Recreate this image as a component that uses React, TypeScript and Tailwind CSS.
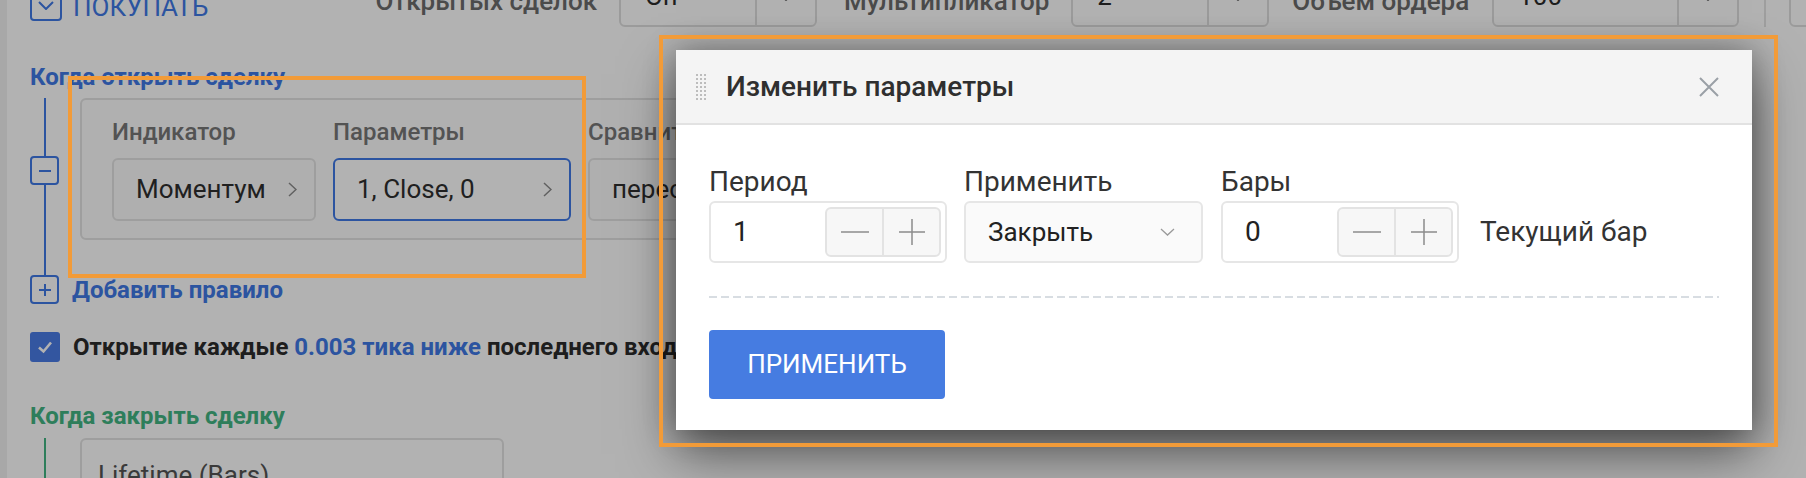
import React from "react";

function ChevronDown({ w = 16, h = 9, color = "#777", sw = 2 }: { w?: number; h?: number; color?: string; sw?: number }) {
  return (
    <svg width={w} height={h} viewBox={`0 0 ${w} ${h}`}>
      <path d={`M1 1 L${w / 2} ${h - 1} L${w - 1} 1`} fill="none" stroke={color} strokeWidth={sw} />
    </svg>
  );
}

function ChevronRight() {
  return (
    <svg width="9" height="15" viewBox="0 0 9 15">
      <path d="M1 1 L8 7.5 L1 14" fill="none" stroke="#8a8a8a" strokeWidth="1.5" />
    </svg>
  );
}

function TopSelect({ value, className }: { value: string; className: string }) {
  return (
    <div className={`flex h-[62px] shrink-0 rounded-[6px] border-2 border-[#dedede] bg-white ${className}`}>
      <div className="flex flex-1 items-center pl-[24px] text-[26px] text-[#2b2b2b]">{value}</div>
      <div className="flex w-[60px] items-center justify-center border-l-2 border-[#dedede]">
        <ChevronDown />
      </div>
    </div>
  );
}

function TopField({ label, value, className, boxClass }: { label: string; value: string; className: string; boxClass: string }) {
  return (
    <div className={`flex shrink-0 items-center ${className}`}>
      <span className="translate-y-[5px] whitespace-nowrap text-[26px] font-medium text-[#6c6c6c]">{label}</span>
      <TopSelect value={value} className={boxClass} />
    </div>
  );
}

function RuleButton({ text, active, className }: { text: string; active?: boolean; className: string }) {
  return (
    <div
      className={`flex h-[63px] items-center justify-between rounded-[6px] border-2 pl-[22px] pr-[17px] text-[26px] text-[#2f2f2f] ${
        active ? "border-[#4079e6] bg-white" : "border-[#e3e3e3] bg-[#fbfbfb]"
      } ${className}`}
    >
      <span className="whitespace-nowrap">{text}</span>
      <ChevronRight />
    </div>
  );
}

function SquareBtn({ plus }: { plus?: boolean }) {
  return (
    <div className="flex h-[29px] w-[29px] shrink-0 items-center justify-center rounded-[4px] border-2 border-[#4079e6] bg-white">
      <svg width="14" height="14" viewBox="0 0 14 14">
        <path d="M1 7 H13" stroke="#4079e6" strokeWidth="2" />
        {plus && <path d="M7 1 V13" stroke="#4079e6" strokeWidth="2" />}
      </svg>
    </div>
  );
}

function Stepper() {
  return (
    <div className="flex h-[50px] w-[116px] rounded-[6px] border-2 border-[#e3e3e3] bg-[#f7f7f7]">
      <div className="flex flex-1 items-center justify-center border-r-2 border-[#e3e3e3]">
        <svg width="28" height="4" viewBox="0 0 28 4">
          <path d="M0 2 H28" stroke="#8c8c8c" strokeWidth="1.5" />
        </svg>
      </div>
      <div className="flex flex-1 items-center justify-center">
        <svg width="26" height="26" viewBox="0 0 26 26">
          <path d="M0 13 H26 M13 0 V26" stroke="#8c8c8c" strokeWidth="1.5" />
        </svg>
      </div>
    </div>
  );
}

function NumberField({ label, value }: { label: string; value: string }) {
  return (
    <div className="flex w-[238px] shrink-0 flex-col">
      <span className="mb-[2px] text-[28px] leading-[34px] text-[#333]">{label}</span>
      <div className="flex h-[62px] items-center justify-between rounded-[6px] border-2 border-[#e6e6e6] bg-white pl-[22px] pr-[4px]">
        <span className="text-[28px] text-[#222]">{value}</span>
        <Stepper />
      </div>
    </div>
  );
}

export default function App() {
  return (
    <div className="relative h-[478px] w-[1806px] overflow-hidden bg-[#f1f1f1] font-['Roboto',sans-serif]">
      {/* page under the dialog */}
      <div className="ml-[7px] flex h-full flex-col bg-white pl-[23px]">
        <div className="-mt-[35px] flex h-[62px] shrink-0 items-center">
          <div className="mb-[6px] flex h-[32px] shrink-0 items-center gap-[11px] self-end">
            <div className="flex h-[32px] w-[32px] items-center justify-center rounded-[4px] border-2 border-[#4079e6]">
              <ChevronDown color="#4079e6" />
            </div>
            <span className="translate-y-[2px] text-[26px] leading-[32px] text-[#4079e6]">ПОКУПАТЬ</span>
          </div>
          <TopField label="Открытых сделок" value="On" className="ml-[167px] gap-[22px]" boxClass="w-[198px]" />
          <TopField label="Мультипликатор" value="2" className="ml-[27px] gap-[22px]" boxClass="w-[198px]" />
          <TopField label="Объем ордера" value="100" className="ml-[23px] gap-[23px]" boxClass="w-[247px]" />
          <div className="ml-[25px] h-[62px] w-[2px] shrink-0 bg-[#e2e2e2]" />
          <TopSelect value="" className="ml-[23px] w-[198px]" />
        </div>

        <div className="mt-[35px] text-[24px] font-bold leading-[30px] text-[#4079e6]">Когда открыть сделку</div>

        <div className="mt-[6px] flex h-[177px] shrink-0">
          <div className="flex w-[29px] shrink-0 flex-col items-center">
            <div className="h-[58px] w-[2px] bg-[#4079e6]" />
            <SquareBtn />
            <div className="w-[2px] flex-1 bg-[#4079e6]" />
          </div>
          <div className="ml-[21px] h-[142px] w-[1200px] shrink-0 rounded-[6px] border-2 border-[#e2e2e2] bg-[#fcfcfc] pl-[30px] pt-[17px]">
            <div className="flex gap-[17px]">
              <div className="flex w-[204px] flex-col">
                <span className="text-[24px] font-medium leading-[30px] text-[#777]">Индикатор</span>
                <RuleButton text="Моментум" className="mt-[11px] w-[204px]" />
              </div>
              <div className="flex w-[238px] flex-col">
                <span className="text-[24px] font-medium leading-[30px] text-[#777]">Параметры</span>
                <RuleButton text="1, Close, 0" active className="mt-[11px] w-[238px]" />
              </div>
              <div className="flex w-[300px] flex-col">
                <span className="text-[24px] font-medium leading-[30px] text-[#777]">Сравнить</span>
                <RuleButton text="пересекает сверху" className="mt-[11px] w-[300px]" />
              </div>
            </div>
          </div>
        </div>

        <div className="flex h-[29px] shrink-0 items-center gap-[13px]">
          <SquareBtn plus />
          <span className="text-[24px] font-bold text-[#4079e6]">Добавить правило</span>
        </div>

        <div className="mt-[28px] flex h-[30px] shrink-0 items-center gap-[13px]">
          <div className="flex h-[30px] w-[30px] items-center justify-center rounded-[3px] bg-[#4a7be5]">
            <svg width="16" height="14" viewBox="0 0 16 14">
              <path d="M2 7.5 L6.5 11.5 L14 2.5" fill="none" stroke="#fff" strokeWidth="2.6" />
            </svg>
          </div>
          <span className="whitespace-nowrap text-[24px] font-bold text-[#2c2c2c]">
            Открытие каждые <span className="text-[#4079e6]">0.003 тика ниже</span> последнего входа
          </span>
        </div>

        <div className="mt-[39px] text-[24px] font-bold leading-[30px] text-[#43b583]">Когда закрыть сделку</div>

        <div className="mt-[7px] flex flex-1">
          <div className="flex w-[29px] shrink-0 justify-center">
            <div className="w-[2px] bg-[#43b583]" />
          </div>
          <div className="ml-[21px] h-[100px] w-[424px] shrink-0 rounded-[6px] border-2 border-[#e2e2e2] pl-[16px] pt-[20px]">
            <span className="text-[26px] leading-[30px] text-[#535353]">Lifetime (Bars)</span>
          </div>
        </div>
      </div>

      {/* dimming overlay */}
      <div className="absolute inset-0 bg-black/30" />

      {/* dialog */}
      <div className="absolute left-[676px] top-[50px] flex h-[380px] w-[1076px] flex-col bg-white shadow-[0_0_30px_rgba(0,0,0,0.3),0_24px_50px_rgba(0,0,0,0.5)]">
        <div className="flex h-[75px] shrink-0 items-center border-b-2 border-[#e2e2e2] bg-[#f4f4f4] pl-[20px] pr-[33px]">
          <div className="grid grid-cols-3 gap-[2px]">
            {Array.from({ length: 21 }).map((_, i) => (
              <div key={i} className="h-[2px] w-[2px] bg-[#bdbdbd]" />
            ))}
          </div>
          <span className="ml-[20px] text-[28px] font-medium text-[#2f2f2f]">Изменить параметры</span>
          <svg className="ml-auto" width="20" height="20" viewBox="0 0 20 20">
            <path d="M1 1 L19 19 M19 1 L1 19" stroke="#9aa0a6" strokeWidth="2" />
          </svg>
        </div>

        <div className="flex flex-1 flex-col px-[33px] pt-[40px]">
          <div className="flex items-end">
            <NumberField label="Период" value="1" />
            <div className="ml-[17px] flex w-[239px] shrink-0 flex-col">
              <span className="mb-[2px] text-[28px] leading-[34px] text-[#333]">Применить</span>
              <div className="flex h-[62px] items-center justify-between rounded-[6px] border-2 border-[#e6e6e6] bg-[#fafafa] pl-[22px] pr-[26px]">
                <span className="text-[26px] text-[#222]">Закрыть</span>
                <ChevronDown w={15} h={8} color="#9a9a9a" sw={1.3} />
              </div>
            </div>
            <div className="ml-[18px]">
              <NumberField label="Бары" value="0" />
            </div>
            <div className="ml-[21px] flex h-[62px] items-center whitespace-nowrap text-[28px] text-[#333]">Текущий бар</div>
          </div>

          <div className="mt-[33px] h-[2px] shrink-0 bg-[repeating-linear-gradient(90deg,#d8dde2_0_8px,transparent_8px_12px)]" />

          <button className="mt-[32px] h-[69px] w-[236px] rounded-[4px] bg-[#467ce1] text-[26px] text-white">ПРИМЕНИТЬ</button>
        </div>
      </div>

      {/* annotation frames */}
      <div className="pointer-events-none absolute left-[659px] top-[35px] h-[412px] w-[1119px] border-4 border-[#f29b38]" />
      <div className="pointer-events-none absolute left-[68px] top-[76px] h-[202px] w-[518px] border-4 border-[#f29b38]" />
    </div>
  );
}
